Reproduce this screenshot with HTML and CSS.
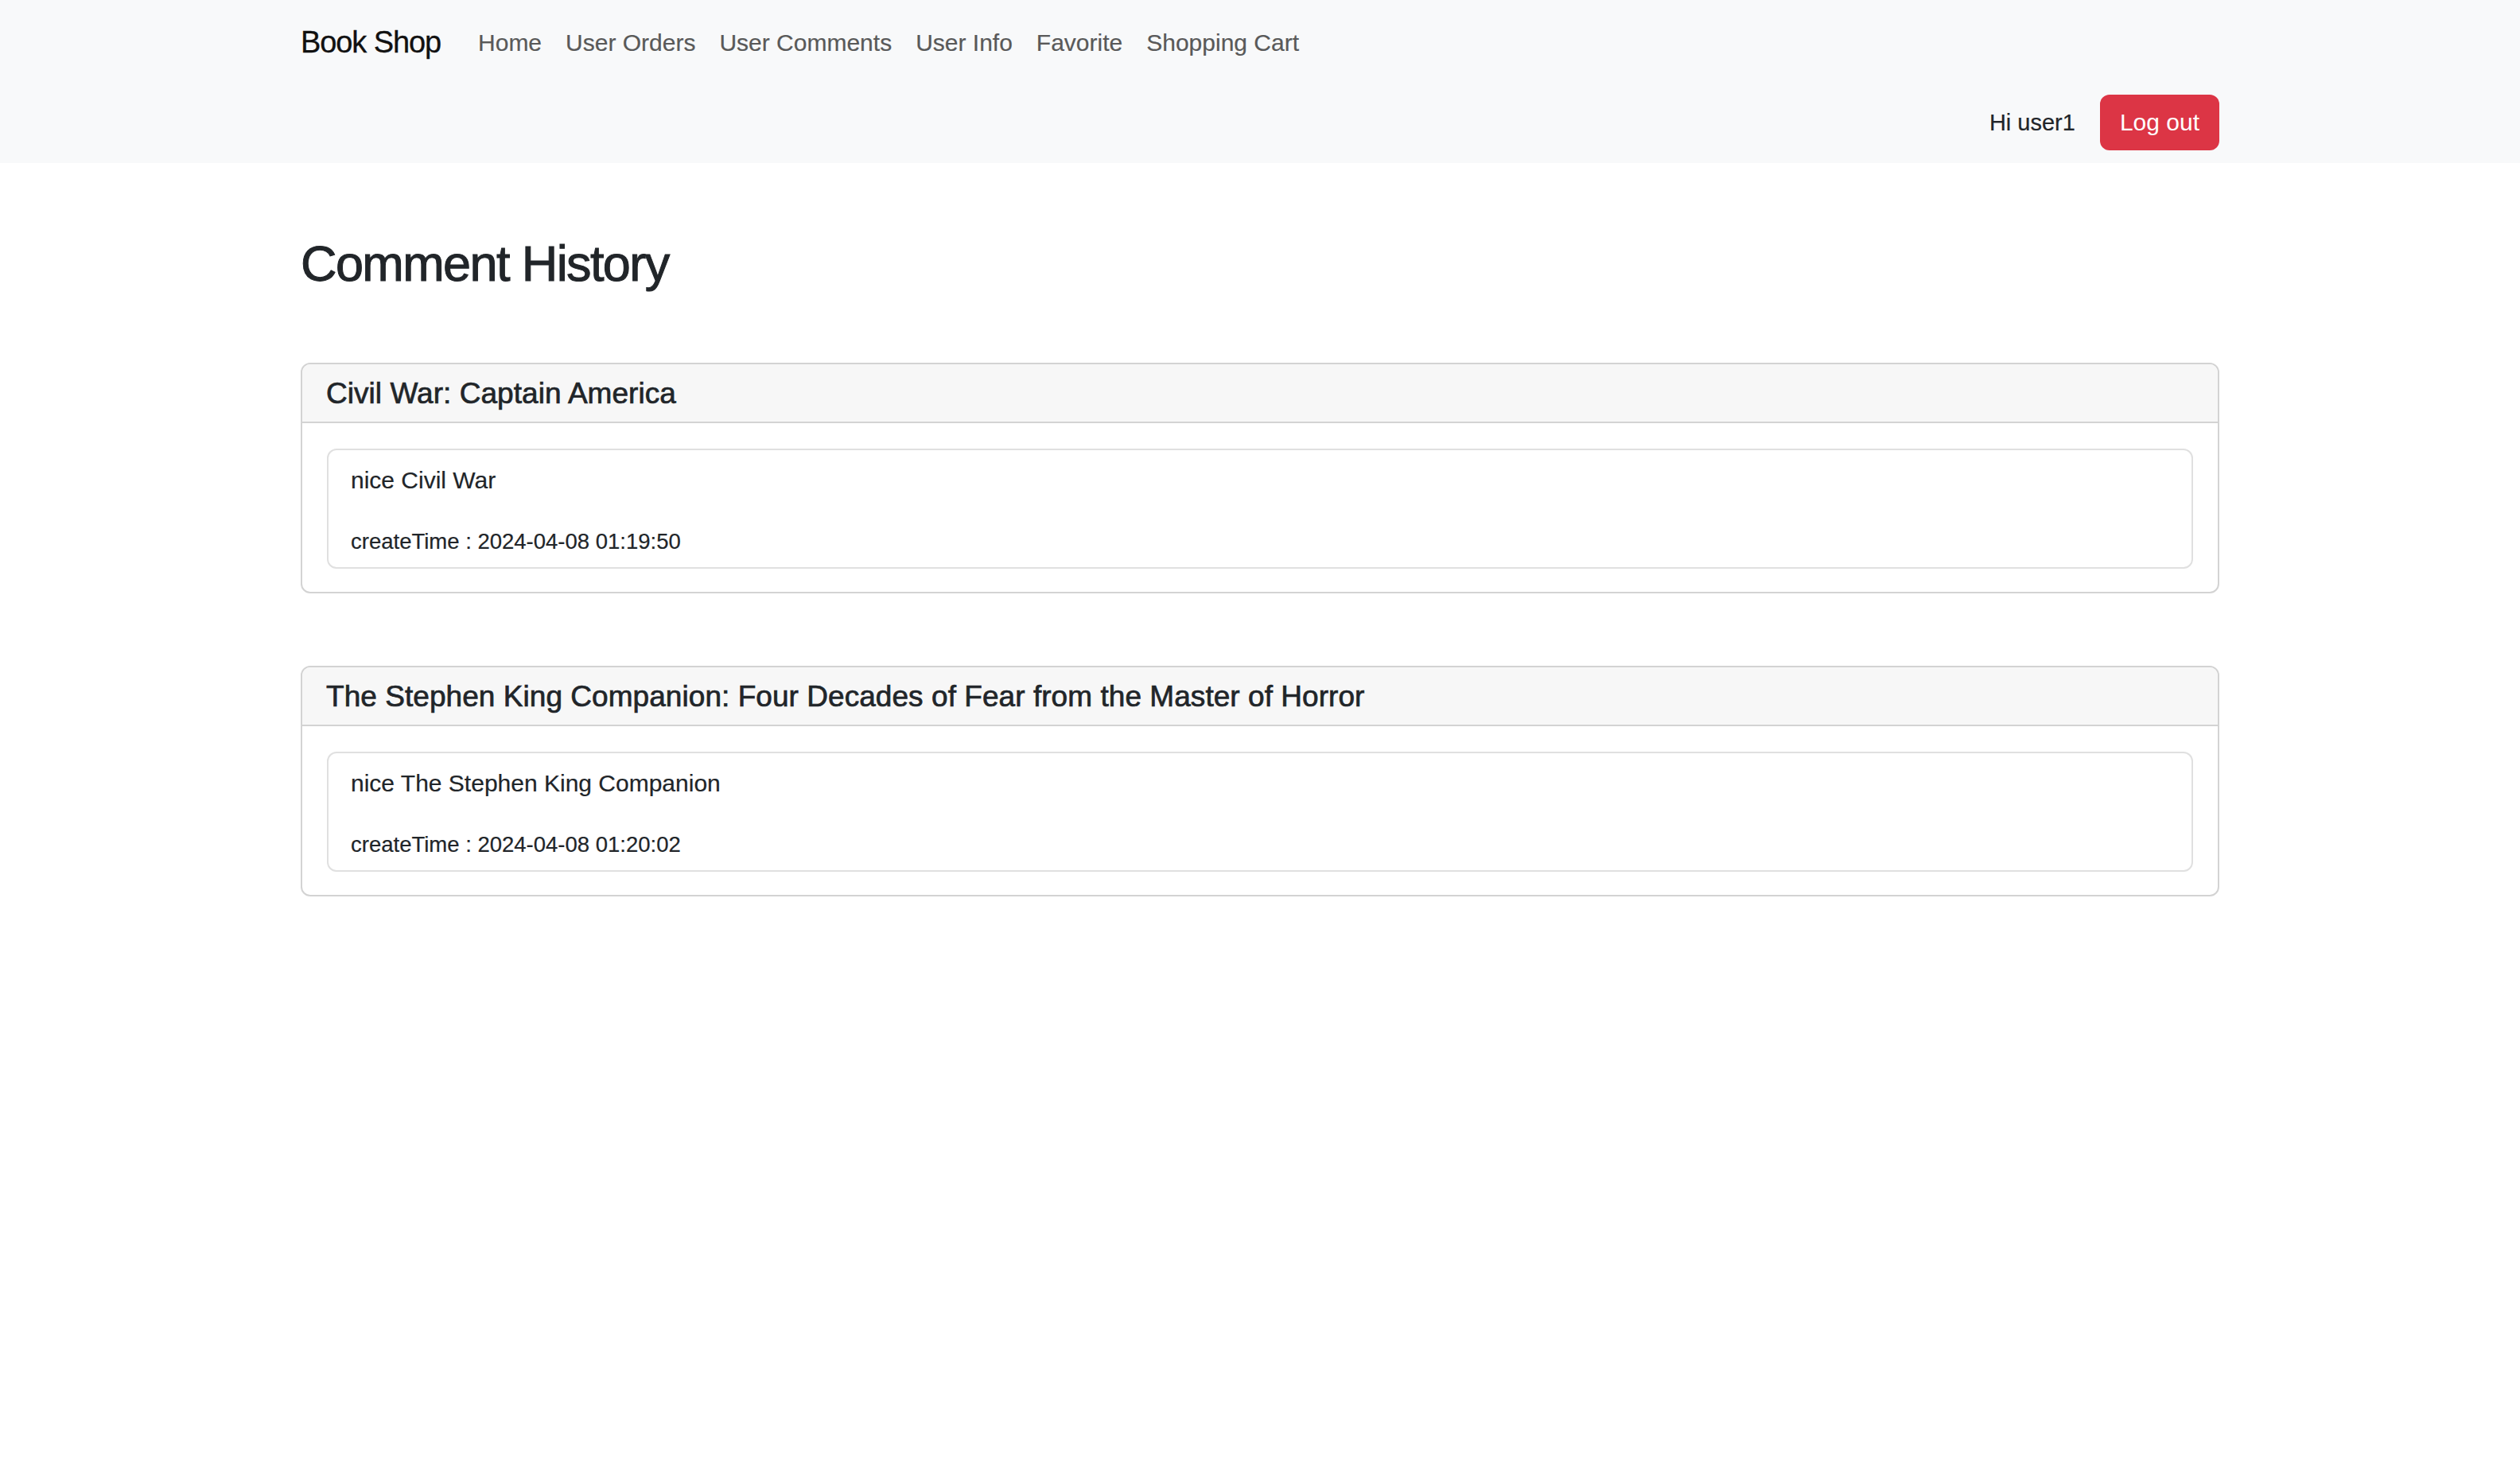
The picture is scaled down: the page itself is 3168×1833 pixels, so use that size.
FILE: index.html
```html
<!DOCTYPE html>
<html lang="en">
<head>
<meta charset="utf-8">
<title>Book Shop - Comment History</title>
<link rel="stylesheet" href="styles.css">
</head>
<body>
<nav class="navbar">
  <div class="container">
    <div class="nav-row">
      <a class="brand" href="#">Book Shop</a>
      <ul class="nav-links">
        <li><a href="#">Home</a></li>
        <li><a href="#">User Orders</a></li>
        <li><a href="#">User Comments</a></li>
        <li><a href="#">User Info</a></li>
        <li><a href="#">Favorite</a></li>
        <li><a href="#">Shopping Cart</a></li>
      </ul>
    </div>
    <div class="user-row">
      <span class="greeting">Hi user1</span>
      <button class="btn-logout" type="button">Log out</button>
    </div>
  </div>
</nav>
<main class="container main">
  <h1 class="page-title">Comment History</h1>
  <section class="card">
    <div class="card-header">Civil War: Captain America</div>
    <div class="card-body">
      <div class="comment">
        <p class="comment-text">nice Civil War</p>
        <p class="comment-time">createTime : 2024-04-08 01:19:50</p>
      </div>
    </div>
  </section>
  <section class="card">
    <div class="card-header">The Stephen King Companion: Four Decades of Fear from the Master of Horror</div>
    <div class="card-body">
      <div class="comment">
        <p class="comment-text">nice The Stephen King Companion</p>
        <p class="comment-time">createTime : 2024-04-08 01:20:02</p>
      </div>
    </div>
  </section>
</main>
</body>
</html>
```
FILE: styles.css
```css
* { box-sizing: border-box; }
html, body {
  margin: 0;
  padding: 0;
  background: #ffffff;
  color: #212529;
  font-family: "Liberation Sans", Arial, sans-serif;
}
.container {
  width: 2412px;
  margin: 0 auto;
}
.navbar {
  background: #f8f9fa;
  height: 205px;
}
.nav-row {
  height: 104px;
  display: flex;
  align-items: center;
}
.brand {
  font-size: 38px;
  letter-spacing: -1.1px;
  color: #111111;
  text-decoration: none;
  margin-right: 32px;
  margin-top: 2px;
  -webkit-text-stroke: 0.3px #111111;
}
.nav-links {
  list-style: none;
  margin: 0;
  padding: 4px 0 0 0;
  display: flex;
}
.nav-links a {
  display: block;
  padding: 0 15px;
  font-size: 30px;
  color: #595959;
  text-decoration: none;
  -webkit-text-stroke: 0.2px #595959;
}
.user-row {
  display: flex;
  justify-content: flex-end;
  align-items: center;
  padding-top: 15px;
  gap: 31px;
}
.greeting {
  font-size: 29px;
  color: #212529;
  -webkit-text-stroke: 0.2px #212529;
}
.btn-logout {
  height: 70px;
  padding: 0 25px;
  border: none;
  border-radius: 12px;
  background: #dc3545;
  color: #ffffff;
  font-family: "Liberation Sans", Arial, sans-serif;
  font-size: 30px;
}
.main {
  padding-top: 88px;
}
.page-title {
  margin: 0 0 87px 0;
  font-size: 63px;
  line-height: 76px;
  font-weight: 400;
  letter-spacing: -1.6px;
  color: #212529;
  -webkit-text-stroke: 1px #212529;
}
.card {
  border: 2px solid #d3d3d3;
  border-radius: 12px;
  margin-bottom: 91px;
  overflow: hidden;
}
.card-header {
  height: 74px;
  display: flex;
  align-items: center;
  padding: 2px 30px 0 30px;
  background: #f7f7f7;
  border-bottom: 2px solid #d3d3d3;
  font-size: 37px;
  font-weight: 400;
  letter-spacing: 0.05px;
  color: #212529;
  -webkit-text-stroke: 0.7px #212529;
}
.card-body {
  padding: 32px 31px 29px 31px;
}
.comment {
  border: 2px solid #e0e0e0;
  border-radius: 12px;
  padding: 14px 28px 11px 28px;
}
.comment-text {
  margin: 0 0 32px 0;
  font-size: 30px;
  line-height: 48px;
  -webkit-text-stroke: 0.2px #212529;
}
.comment-time {
  margin: 0;
  font-size: 27.5px;
  line-height: 42px;
  -webkit-text-stroke: 0.2px #212529;
}
```
